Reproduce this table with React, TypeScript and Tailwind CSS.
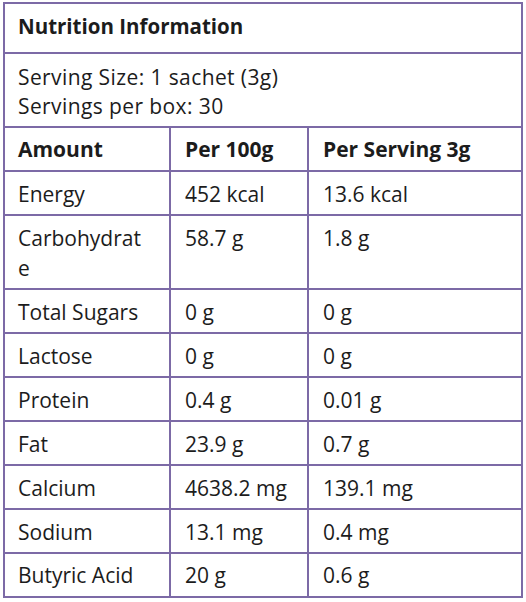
import React from "react";

const rows: [string, string, string, boolean?][] = [
  ["Energy", "452 kcal", "13.6 kcal"],
  ["Carbohydrat\ne", "58.7 g", "1.8 g", true],
  ["Total Sugars", "0 g", "0 g"],
  ["Lactose", "0 g", "0 g"],
  ["Protein", "0.4 g", "0.01 g"],
  ["Fat", "23.9 g", "0.7 g"],
  ["Calcium", "4638.2 mg", "139.1 mg"],
  ["Sodium", "13.1 mg", "0.4 mg"],
  ["Butyric Acid", "20 g", "0.6 g"],
];

export default function App() {
  return (
    <div
      className="w-[526px] h-[602px] bg-white pt-[2px] pl-[3px] text-[#1c1c1c]"
      style={{ fontFamily: "'Open Sans', Lato, sans-serif" }}
    >
      <div className="w-[520px] border-2 border-[#7c6aa6] text-[21px]">
        <div className="h-[50px] border-b-2 border-[#7c6aa6] pl-[13px] pt-[8px] leading-[28px] font-bold text-[20.5px]">
          Nutrition Information
        </div>
        <div className="h-[74px] border-b-2 border-[#7c6aa6] pl-[13px] pt-[9px] leading-[29px] tracking-[0.4px]">
          <div>Serving Size: 1 sachet (3g)</div>
          <div>Servings per box: 30</div>
        </div>
        <div className="grid grid-cols-[166px_138px_1fr]">
          <div className="h-[44px] border-b-2 border-r-2 border-[#7c6aa6] pl-[13px] pt-[2px] flex items-center font-bold">Amount</div>
          <div className="h-[44px] border-b-2 border-r-2 border-[#7c6aa6] pl-[14px] pt-[2px] flex items-center font-bold">Per 100g</div>
          <div className="h-[44px] border-b-2 border-[#7c6aa6] pl-[14px] pt-[2px] flex items-center font-bold">Per Serving 3g</div>
          {rows.map(([a, b, c, tall], i) => {
            const last = i === rows.length - 1;
            const bb = last ? "" : "border-b-2";
            const box = tall
              ? "h-[74px] pt-[7px] leading-[30px]"
              : last
              ? "h-[42px] pt-[2px] flex items-center"
              : "h-[44px] pt-[3px] flex items-center";
            return (
              <React.Fragment key={i}>
                <div className={`${bb} border-r-2 border-[#7c6aa6] pl-[13px] ${box} whitespace-pre-line`}>{a}</div>
                <div className={`${bb} border-r-2 border-[#7c6aa6] pl-[14px] ${box}`}>{b}</div>
                <div className={`${bb} border-[#7c6aa6] pl-[14px] ${box}`}>{c}</div>
              </React.Fragment>
            );
          })}
        </div>
      </div>
    </div>
  );
}
